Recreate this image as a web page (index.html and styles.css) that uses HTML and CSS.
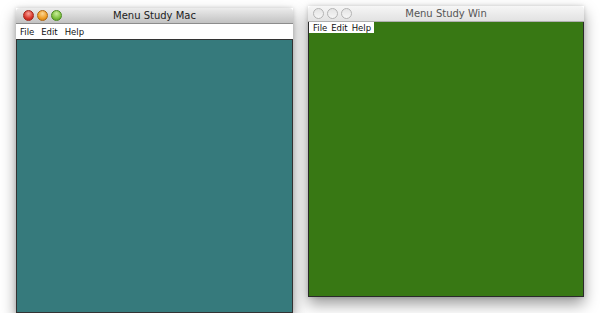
FILE: index.html
```html
<!DOCTYPE html>
<html lang="en">
<head>
  <meta charset="UTF-8">
  <title>Menu Study</title>
  <link rel="stylesheet" href="styles.css">
</head>
<body>
  <div class="desk">
    <div class="window mac">
      <div class="titlebar">
        <div class="lights">
          <span class="light red"></span>
          <span class="light orange"></span>
          <span class="light green"></span>
        </div>
        <span class="title">Menu Study Mac</span>
      </div>
      <div class="menubar">
        <span>File</span><span>Edit</span><span>Help</span>
      </div>
      <div class="content"></div>
    </div>

    <div class="window win">
      <div class="titlebar">
        <div class="lights">
          <span class="light"></span>
          <span class="light"></span>
          <span class="light"></span>
        </div>
        <span class="title">Menu Study Win</span>
      </div>
      <div class="content">
        <div class="menubar">
          <span>File</span><span>Edit</span><span>Help</span>
        </div>
      </div>
    </div>
  </div>
</body>
</html>
```

FILE: styles.css
```css
body {
  margin: 0;
  background: #fff;
  font-family: "DejaVu Sans", "Liberation Sans", sans-serif;
  overflow: hidden;
}

.desk {
  display: flex;
  align-items: flex-start;
  gap: 15px;
  padding-left: 16px;
}

.window {
  width: 277px;
  display: flex;
  flex-direction: column;
  box-shadow: 0 7px 14px rgba(0, 0, 0, 0.4), 0 0 4px rgba(0, 0, 0, 0.15);
}

.mac {
  margin-top: 8px;
}

.win {
  margin-top: 6px;
  width: 276px;
}

.titlebar {
  height: 15px;
  display: flex;
  align-items: center;
  justify-content: center;
  position: relative;
  border-radius: 4px 4px 0 0;
  background: linear-gradient(#ececec, #c2c2c2);
  border-bottom: 1px solid #8c8c8c;
}

.win .titlebar {
  background: linear-gradient(#f6f6f6, #e2e2e2);
  border-bottom: 1px solid #b0b0b0;
}

.title {
  font-size: 10px;
  color: #222;
}

.win .title {
  color: #555;
}

.lights {
  position: absolute;
  left: 7px;
  top: 2px;
  display: flex;
  gap: 3px;
}

.win .lights {
  left: 5px;
}

.light {
  width: 11px;
  height: 11px;
  border-radius: 50%;
  box-sizing: border-box;
  border: 1px solid #b4b4b4;
  background: linear-gradient(#e4e4e4, #f6f6f6);
}

.light.red {
  border-color: #a3241a;
  background: radial-gradient(circle at 50% 30%, #f8a39a, #d8362a 60%, #b01e14);
}

.light.orange {
  border-color: #b0660e;
  background: radial-gradient(circle at 50% 30%, #fcd594, #ef9e26 60%, #c7720b);
}

.light.green {
  border-color: #4b8a21;
  background: radial-gradient(circle at 50% 30%, #c9ee9a, #7fc03f 60%, #4f951d);
}

.menubar {
  display: flex;
  font-size: 8.5px;
  color: #111;
  background: #fff;
}

.mac .menubar {
  height: 15px;
  align-items: center;
  padding-left: 4px;
  gap: 7px;
}

.win .menubar {
  align-self: flex-start;
  height: 11px;
  align-items: center;
  padding: 0 3px 0 4px;
  gap: 4px;
}

.content {
  height: 272px;
  background: #367a7c;
  border: 1px solid #333;
  display: flex;
  flex-direction: column;
}

.win .content {
  height: 274px;
  background: #387814;
  border: 1px solid #2a2a2a;
  border-top: none;
}
```
